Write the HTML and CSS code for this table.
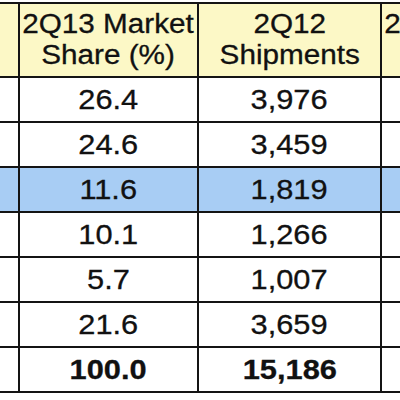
FILE: index.html
```html
<!DOCTYPE html>
<html lang="en">
<head>
  <meta charset="UTF-8" />
  <meta name="viewport" content="width=device-width, initial-scale=1.0" />
  <title>US PC Vendor Shipments 2Q13</title>
  <link rel="stylesheet" href="styles.css">
</head>
<body>
  <div class="sheet">
    <div class="cell head name"><span>Company</span></div>
    <div class="cell head"><span>2Q13 Market<br>Share (%)</span></div>
    <div class="cell head"><span>2Q12<br>Shipments</span></div>
    <div class="cell head"><span>2Q12 Market<br>Share (%)</span></div>

    <div class="cell name"><span>HP</span></div>
    <div class="cell"><span>26.4</span></div>
    <div class="cell"><span>3,976</span></div>
    <div class="cell"><span>25.2</span></div>

    <div class="cell name"><span>Dell</span></div>
    <div class="cell"><span>24.6</span></div>
    <div class="cell"><span>3,459</span></div>
    <div class="cell"><span>21.9</span></div>

    <div class="cell name hl"><span>Apple</span></div>
    <div class="cell hl"><span>11.6</span></div>
    <div class="cell hl"><span>1,819</span></div>
    <div class="cell hl"><span>11.5</span></div>

    <div class="cell name"><span>Toshiba</span></div>
    <div class="cell"><span>10.1</span></div>
    <div class="cell"><span>1,266</span></div>
    <div class="cell"><span>8.0</span></div>

    <div class="cell name"><span>Lenovo</span></div>
    <div class="cell"><span>5.7</span></div>
    <div class="cell"><span>1,007</span></div>
    <div class="cell"><span>6.4</span></div>

    <div class="cell name"><span>Others</span></div>
    <div class="cell"><span>21.6</span></div>
    <div class="cell"><span>3,659</span></div>
    <div class="cell"><span>23.2</span></div>

    <div class="cell name total"><span>Total</span></div>
    <div class="cell total"><span>100.0</span></div>
    <div class="cell total"><span>15,186</span></div>
    <div class="cell total"><span>100.0</span></div>
  </div>
</body>
</html>
```

FILE: styles.css
```css
* {
  box-sizing: border-box;
}

body {
  margin: 0;
  background: #fff;
  overflow: hidden;
  font-family: "Liberation Sans", Arial, sans-serif;
  color: #111;
}

.sheet {
  display: grid;
  grid-template-columns: 177px 177px 181px 177px;
  grid-template-rows: 72px repeat(7, 43px);
  gap: 2px;
  width: max-content;
  margin: 2px 0 0 -161px;
  padding: 2px;
  background: #141414;
}

.cell {
  background: #fff;
  display: flex;
  align-items: center;
  justify-content: center;
  text-align: center;
  font-size: 28px;
  white-space: nowrap;
}

.cell span {
  display: inline-block;
  transform: scaleX(1.1);
  -webkit-text-stroke: 0.3px #111;
}

.head {
  background: #fcf8c6;
  font-size: 27px;
  line-height: 31px;
}

.name {
  justify-content: flex-start;
  padding-left: 6px;
}

.name span {
  transform-origin: left center;
}

.hl {
  background: #a8cdf4;
}

.total {
  font-weight: bold;
}
```
